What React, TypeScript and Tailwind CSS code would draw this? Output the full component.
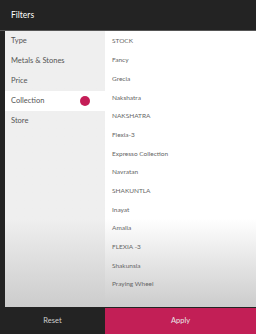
import React from "react";

const cats = ["Type", "Metals & Stones", "Price", "Collection", "Store"];
const items = [
  "STOCK",
  "Fancy",
  "Grecia",
  "Nakshatra",
  "NAKSHATRA",
  "Flexia-3",
  "Expresso Collection",
  "Navratan",
  "SHAKUNTLA",
  "Inayat",
  "Amalia",
  "FLEXIA -3",
  "Shakunsla",
  "Praying Wheel",
];

export default function App() {
  return (
    <div
      className="w-[256px] h-[334px] bg-[#232323] flex flex-col overflow-hidden"
      style={{ fontFamily: "Lato, 'Noto Sans', sans-serif" }}
    >
      <div className="h-[31px] border-b border-[#555] flex items-center pl-[11px] text-white text-[8.5px]">
        Filters
      </div>
      <div className="h-[276px] ml-[5px] flex">
        <div className="w-[100px] bg-linear-to-b from-[#efefef] from-68% to-[#cccccc] flex flex-col">
          {cats.map((c) => (
            <div
              key={c}
              className={`h-[20px] flex items-center pl-[6px] pr-[15px] justify-between text-[7.5px] text-[#555] ${
                c === "Collection" ? "bg-white" : ""
              }`}
            >
              <span>{c}</span>
              {c === "Collection" && (
                <span className="w-[10px] h-[10px] rounded-full bg-[#c41d57]" />
              )}
            </div>
          ))}
        </div>
        <div className="flex-1 bg-linear-to-b from-white from-68% to-[#cccccc] flex flex-col pt-[1px]">
          {items.map((t) => (
            <div
              key={t}
              className="h-[18.7px] flex items-center pl-[7px] text-[6.5px] text-[#666]"
            >
              {t}
            </div>
          ))}
        </div>
      </div>
      <div className="mt-[1px] h-[26px] flex">
        <div className="w-[105px] flex items-center justify-center text-[#cfcfcf] text-[7.5px]">
          Reset
        </div>
        <div className="flex-1 bg-[#c21f56] flex items-center justify-center text-[#e8e8e8] text-[7.5px]">
          Apply
        </div>
      </div>
    </div>
  );
}
